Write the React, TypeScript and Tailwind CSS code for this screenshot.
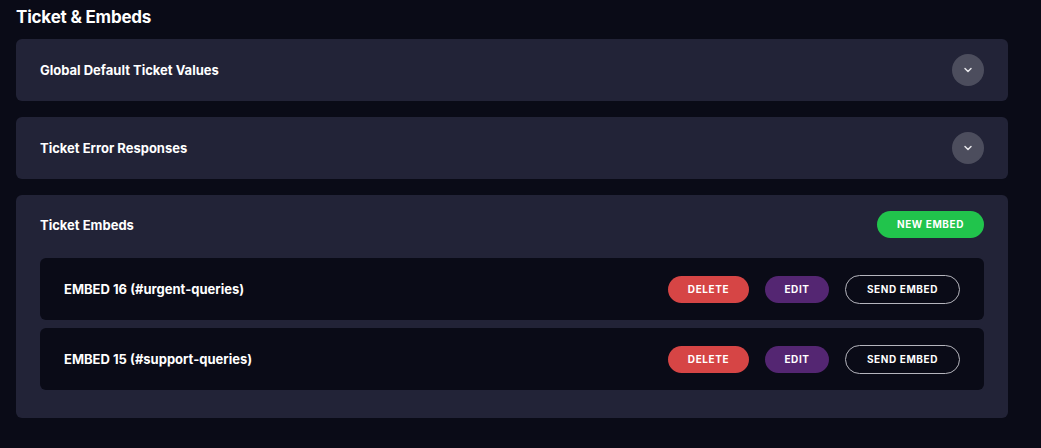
import { ChevronDown } from "lucide-react";

const EMBEDS = [
  { id: 16, channel: "urgent-queries" },
  { id: 15, channel: "support-queries" },
];

function Collapsed({ title }: { title: string }) {
  return (
    <div className="flex h-[62px] items-center justify-between rounded-md bg-[#222337] px-6">
      <h3 className="pt-[2px] text-[13px] font-bold text-white">{title}</h3>
      <button className="flex h-8 w-8 items-center justify-center rounded-full bg-[#4c4d5d] text-[#e6e6ea]">
        <ChevronDown className="h-3 w-3" strokeWidth={3} />
      </button>
    </div>
  );
}

export default function App() {
  return (
    <div
      className="min-h-screen bg-[#0a0b17] px-4 pb-8 pt-[6px]"
      style={{ fontFamily: "Inter, 'Noto Sans', sans-serif" }}
    >
      <div className="w-[992px]">
        <h2 className="mb-[11px] text-[17px] font-bold leading-[22px] tracking-[-0.2px] text-white">
          Ticket &amp; Embeds
        </h2>

        <div className="flex flex-col gap-4">
          <Collapsed title="Global Default Ticket Values" />
          <Collapsed title="Ticket Error Responses" />

          {/* ── Embeds ── */}
          <div className="rounded-md bg-[#222337] px-6 pb-7 pt-4">
            <div className="flex h-[27px] items-center justify-between">
              <h3 className="pt-[2px] text-[13px] font-bold text-white">Ticket Embeds</h3>
              <button className="h-[27px] w-[107px] rounded-full bg-[#21c44c] text-[10px] font-bold tracking-[0.06em] text-white">
                NEW EMBED
              </button>
            </div>

            <div className="mt-5 flex flex-col gap-2">
              {EMBEDS.map((e) => (
                <div
                  key={e.id}
                  className="flex h-[62px] items-center justify-between rounded-md bg-[#0a0b17] px-6"
                >
                  <span className="pt-[2px] text-[13px] font-bold text-white">
                    EMBED {e.id} (#{e.channel})
                  </span>
                  <div className="flex items-center gap-4">
                    <button className="h-[27px] w-[81px] rounded-full bg-[#d64545] text-[10px] font-bold tracking-[0.06em] text-white">
                      DELETE
                    </button>
                    <button className="h-[27px] w-16 rounded-full bg-[#542672] text-[10px] font-bold tracking-[0.06em] text-white">
                      EDIT
                    </button>
                    <button className="h-[29px] w-[115px] rounded-full border border-[#b5b5bd] text-[10px] font-bold tracking-[0.06em] text-white">
                      SEND EMBED
                    </button>
                  </div>
                </div>
              ))}
            </div>
          </div>
        </div>
      </div>
    </div>
  );
}
